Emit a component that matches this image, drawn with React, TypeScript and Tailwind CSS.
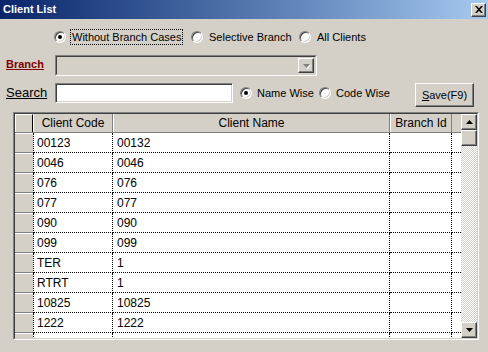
import React from 'react';

const rows = [
  { code: '00123', name: '00132' },
  { code: '0046', name: '0046' },
  { code: '076', name: '076' },
  { code: '077', name: '077' },
  { code: '090', name: '090' },
  { code: '099', name: '099' },
  { code: 'TER', name: '1' },
  { code: 'RTRT', name: '1' },
  { code: '10825', name: '10825' },
  { code: '1222', name: '1222' },
  { code: '', name: '' },
];

const raised =
  'border border-t-white border-l-white border-r-[#404040] border-b-[#404040] shadow-[inset_-1px_-1px_0_#808080]';

function Radio({ checked }: { checked?: boolean }) {
  return (
    <span className="w-[12px] h-[12px] shrink-0 rounded-full bg-white border border-t-[#808080] border-l-[#808080] border-b-white border-r-white shadow-[inset_1px_1px_0_#404040,inset_-1px_-1px_0_#d4d0c8] flex items-center justify-center">
      {checked && <span className="w-[4px] h-[4px] rounded-full bg-black" />}
    </span>
  );
}

function Arrow({ up, disabled }: { up?: boolean; disabled?: boolean }) {
  return (
    <svg width="7" height="4" viewBox="0 0 7 4" className={disabled ? 'drop-shadow-[1px_1px_0_#ffffff]' : ''}>
      <path d={up ? 'M3.5 0L7 4H0z' : 'M0 0h7L3.5 4z'} fill={disabled ? '#808080' : '#000000'} />
    </svg>
  );
}

export default function App() {
  return (
    <div className="w-[488px] h-[352px] bg-[#d4d0c8] font-['Liberation_Sans',Arial,sans-serif] text-[11px] text-black overflow-hidden flex flex-col">
      {/* title bar */}
      <div className="h-[19px] shrink-0 bg-gradient-to-r from-[#0a246a] to-[#a6caf0] flex items-center justify-between pl-[3px] pr-[2px]">
        <span className="text-white font-bold text-[11px] leading-none">Client List</span>
        <div className={`w-[15px] h-[14px] bg-[#d4d0c8] flex items-center justify-center ${raised}`}>
          <svg width="8" height="7" viewBox="0 0 8 7">
            <path d="M0 0h2l2 2.2L6 0h2L5 3.5 8 7H6L4 4.8 2 7H0l3-3.5z" fill="#000" />
          </svg>
        </div>
      </div>

      {/* radio row */}
      <div className="mt-[10px] h-[16px] flex items-center pl-[54px]">
        <div className="w-[137px] flex items-center">
          <Radio checked />
          <span className="ml-[4px] px-[1px] border border-dotted border-black leading-[14px]">Without Branch Cases</span>
        </div>
        <div className="w-[108px] flex items-center">
          <Radio />
          <span className="ml-[6px]">Selective Branch</span>
        </div>
        <div className="flex items-center">
          <Radio />
          <span className="ml-[6px]">All Clients</span>
        </div>
      </div>

      {/* branch row */}
      <div className="mt-[10px] h-[21px] flex items-center">
        <span className="w-[55px] pl-[6px] font-bold text-[#800000] underline -mt-[3px]">Branch</span>
        <div className="w-[262px] h-[21px] border border-t-[#808080] border-l-[#808080] border-b-white border-r-white">
          <div className="h-full border border-t-[#404040] border-l-[#404040] border-b-[#d4d0c8] border-r-[#d4d0c8] flex justify-end p-[1px]">
            <div className={`w-[16px] h-full bg-[#d4d0c8] flex items-center justify-center ${raised}`}>
              <Arrow disabled />
            </div>
          </div>
        </div>
      </div>

      {/* search row */}
      <div className="mt-[7px] h-[24px] flex items-start">
        <span className="w-[55px] pl-[6px] text-[13px] underline leading-[20px]">Search</span>
        <div className="w-[178px] h-[20px] bg-white border border-t-[#808080] border-l-[#808080] border-b-white border-r-white shadow-[inset_1px_1px_0_#404040,inset_-1px_-1px_0_#d4d0c8]" />
        <div className="ml-[7px] w-[79px] h-[20px] flex items-center">
          <Radio checked />
          <span className="ml-[5px]">Name Wise</span>
        </div>
        <div className="w-[96px] h-[20px] flex items-center">
          <Radio />
          <span className="ml-[5px]">Code Wise</span>
        </div>
        <div className={`w-[59px] h-[24px] bg-[#d4d0c8] flex items-center justify-center ${raised}`}>
          <span>
            <span className="underline">S</span>ave(F9)
          </span>
        </div>
      </div>

      {/* grid */}
      <div className="mt-[5px] ml-[13px] w-[466px] h-[228px] border border-t-[#808080] border-l-[#808080] border-b-white border-r-white">
        <div className="w-full h-full border border-t-[#404040] border-l-[#404040] border-b-[#d4d0c8] border-r-[#d4d0c8] flex text-[12px]">
          <div className="w-[446px] flex flex-col overflow-hidden">
            <div className="h-[19px] shrink-0 flex bg-[#d4d0c8] border-b border-b-[#808080]">
              <div className="w-[18px] border-t border-t-white border-l border-l-white border-r border-r-black" />
              <div className="w-[80px] flex items-center justify-center border-l border-l-white border-r border-r-[#808080]">Client Code</div>
              <div className="w-[277px] flex items-center justify-center border-l border-l-white border-r border-r-[#808080]">Client Name</div>
              <div className="w-[62px] flex items-center justify-center border-l border-l-white border-r border-r-[#808080]">Branch Id</div>
              <div className="w-[9px]" />
            </div>
            {rows.map((r, i) => (
              <div key={i} className="h-[20px] shrink-0 flex">
                <div className="w-[18px] shrink-0 bg-[#d4d0c8] border-t border-t-white border-b border-b-[#808080]" />
                <div className="w-[80px] shrink-0 bg-white border-l border-r border-b border-dotted border-black pl-[3px] leading-[20px]">{r.code}</div>
                <div className="w-[277px] shrink-0 bg-white border-r border-b border-dotted border-black pl-[4px] leading-[20px]">{r.name}</div>
                <div className="w-[62px] shrink-0 bg-white border-r border-b border-dotted border-black" />
                <div className="w-[9px] shrink-0 bg-white border-b border-dotted border-black" />
              </div>
            ))}
          </div>
          <div className="w-[16px] flex flex-col bg-[repeating-conic-gradient(#ffffff_0%_25%,#d4d0c8_0%_50%)] bg-[length:2px_2px]">
            <div className={`h-[16px] bg-[#d4d0c8] flex items-center justify-center ${raised}`}>
              <Arrow up />
            </div>
            <div className={`h-[16px] bg-[#d4d0c8] ${raised}`} />
            <div className="flex-1" />
            <div className={`h-[16px] bg-[#d4d0c8] flex items-center justify-center ${raised}`}>
              <Arrow />
            </div>
          </div>
        </div>
      </div>
    </div>
  );
}
